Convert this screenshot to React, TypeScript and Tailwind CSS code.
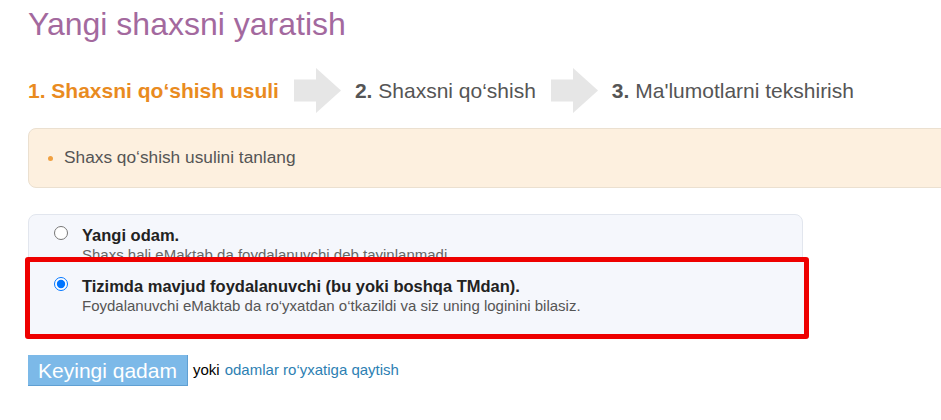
import React from "react"

function StepArrow() {
  return (
    <svg width="47" height="45" viewBox="0 0 47 45" className="shrink-0">
      <path d="M0 11.5 H22 V0 L47 22.5 L22 45 V33.5 H0 Z" fill="#e6e6e6" />
    </svg>
  )
}

const steps = [
  { num: "1.", label: "Shaxsni qo\u2018shish usuli", active: true },
  { num: "2.", label: "Shaxsni qo\u2018shish", active: false },
  { num: "3.", label: "Ma'lumotlarni tekshirish", active: false },
]

export default function App() {
  return (
    <div
      className="w-[941px] h-[420px] overflow-hidden bg-white pl-[28px]"
      style={{ fontFamily: '"Liberation Sans", Arial, sans-serif' }}
    >
      <h1 className="pt-[6px] text-[32px] leading-[36px] text-[#a3699e] font-normal">
        Yangi shaxsni yaratish
      </h1>

      {/* wizard steps */}
      <div className="mt-[26px] flex items-center h-[45px] text-[21px]">
        {steps.map((s, i) => (
          <React.Fragment key={s.num}>
            {i > 0 && (
              <div className="ml-[15px] mr-[14px]">
                <StepArrow />
              </div>
            )}
            {s.active ? (
              <span className="font-bold text-[#e98b1f]">
                {s.num} {s.label}
              </span>
            ) : (
              <span className="text-[#555]">
                <b className="font-bold">{s.num}</b> {s.label}
              </span>
            )}
          </React.Fragment>
        ))}
      </div>

      {/* notice */}
      <div className="mt-[15px] w-[940px] h-[60px] rounded-[8px] border border-[#ebe0d0] bg-[#fdf0df] flex items-center pl-[19px] text-[17.3px] text-[#555]">
        <span className="w-[5px] h-[5px] rounded-full bg-[#f0a040] mr-[11px]" />
        Shaxs qo‘shish usulini tanlang
      </div>

      {/* options */}
      <div className="mt-[26px] w-[775px] rounded-[8px] border border-[#e2e6ee] bg-[#f5f7fc]">
        <div className="h-[42px] overflow-hidden pt-[10px] pl-[25px] flex gap-[14px]">
          <input type="radio" name="kind" className="m-0 mt-[1px] w-[14px] h-[14px] shrink-0" />
          <div>
            <div className="text-[16.5px] leading-[20px] font-bold text-[#222]">Yangi odam.</div>
            <div className="text-[15px] leading-[20px] text-[#666]">
              Shaxs hali eMaktab da foydalanuvchi deb tayinlanmadi
            </div>
          </div>
        </div>
        <div className="relative -ml-[4px] -mr-[7px] -mb-[2px] border-[5px] border-[#ee0000] rounded-[3px] bg-[#f5f7fc] pt-[14px] pb-[18px] pl-[24px] flex gap-[14px]">
          <input
            type="radio"
            name="kind"
            defaultChecked
            className="m-0 mt-[1px] w-[14px] h-[14px] shrink-0"
          />
          <div>
            <div className="text-[16.5px] leading-[20px] font-bold text-[#222]">
              Tizimda mavjud foydalanuvchi (bu yoki boshqa TMdan).
            </div>
            <div className="text-[15px] leading-[20px] text-[#555]">
              Foydalanuvchi eMaktab da ro‘yxatdan o‘tkazildi va siz uning loginini bilasiz.
            </div>
          </div>
        </div>
      </div>

      {/* actions */}
      <div className="mt-[17px] flex items-center">
        <button className="h-[31px] w-[160px] bg-[#7cb9e8] border-r border-b border-[#5f9fd2] text-white text-[21px] leading-none">
          Keyingi qadam
        </button>
        <span className="ml-[5px] text-[15px] text-black">yoki</span>
        <a href="#" className="ml-[5px] text-[15px] text-[#2d7fb3]">
          odamlar ro‘yxatiga qaytish
        </a>
      </div>
    </div>
  )
}
